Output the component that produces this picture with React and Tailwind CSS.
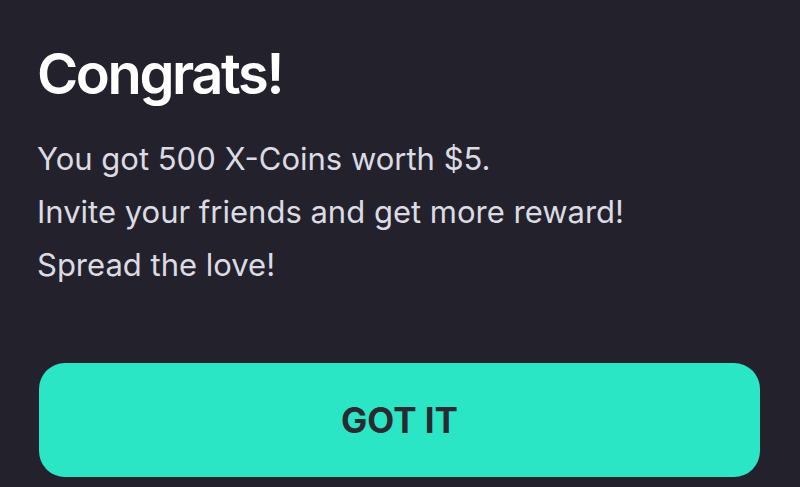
import React from 'react';

const App = () => {
    return (
        <div
            className="w-[800px] h-[487px] bg-[#23222c] overflow-hidden"
            style={{ fontFamily: 'Inter, "Noto Sans", sans-serif' }}
        >
            <div className="pl-[37px] pr-[40px] pt-[38px]">
                <h1 className="text-[56px] leading-[72px] font-semibold text-white tracking-[-2.4px]">
                    Congrats!
                </h1>
                <div className="mt-[22px] text-[31px] leading-[53px] text-[#dcdbe3]">
                    <p>You got 500 X-Coins worth $5.</p>
                    <p>Invite your friends and get more reward!</p>
                    <p>Spread the love!</p>
                </div>
            </div>
            <div className="pl-[39px] pr-[40px] mt-[72px]">
                <button className="w-full h-[114px] rounded-[26px] bg-[#2ae6c5] text-[#2a2a32] text-[35px] font-bold">
                    GOT IT
                </button>
            </div>
        </div>
    );
};

export default App;
